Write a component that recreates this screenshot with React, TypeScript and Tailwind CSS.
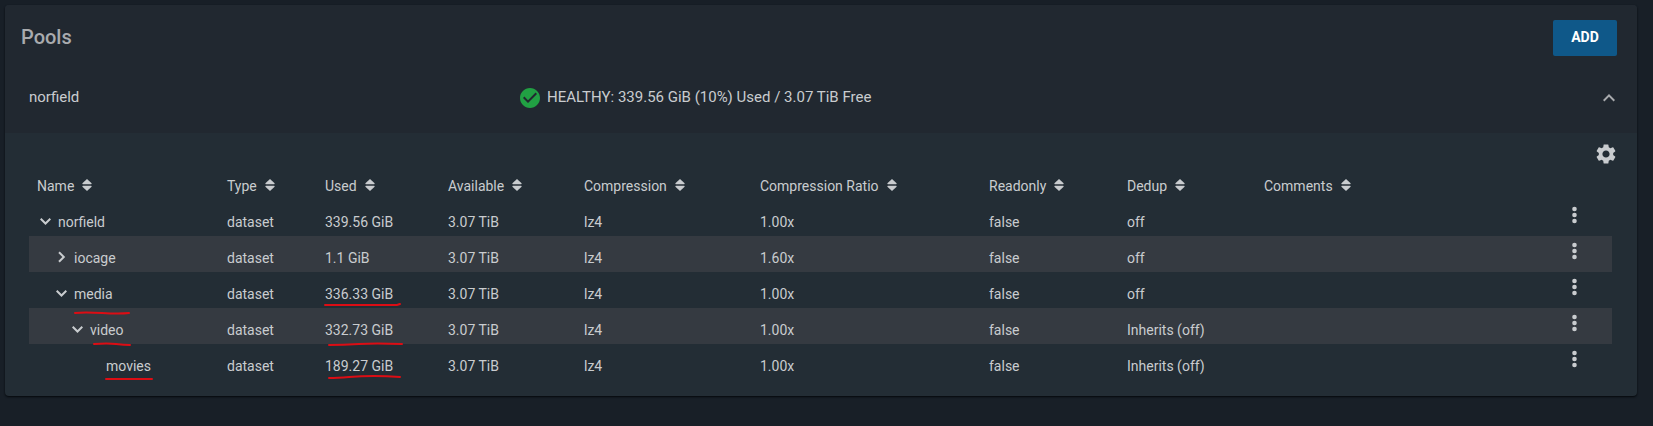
import { useState } from "react";
import { MdCheckCircle, MdExpandLess, MdSettings } from "react-icons/md";

type Mark = { className: string; d: string };

type Dataset = {
  name: string;
  level: number;
  open?: boolean;
  used: string;
  ratio: string;
  dedup: string;
  nameMark?: Mark;
  usedMark?: Mark;
};

const columns = [
  { label: "Name", width: "w-[190px]" },
  { label: "Type", width: "w-[98px]" },
  { label: "Used", width: "w-[123px]" },
  { label: "Available", width: "w-[136px]" },
  { label: "Compression", width: "w-[176px]" },
  { label: "Compression Ratio", width: "w-[229px]" },
  { label: "Readonly", width: "w-[138px]" },
  { label: "Dedup", width: "w-[137px]" },
  { label: "Comments", width: "" },
];

const datasets: Dataset[] = [
  { name: "norfield", level: 0, open: true, used: "339.56 GiB", ratio: "1.00x", dedup: "off" },
  { name: "iocage", level: 1, open: false, used: "1.1 GiB", ratio: "1.60x", dedup: "off" },
  {
    name: "media",
    level: 1,
    open: true,
    used: "336.33 GiB",
    ratio: "1.00x",
    dedup: "off",
    nameMark: { className: "left-0 top-6", d: "M1 5 Q10 4 28 5 T55 5" },
    usedMark: { className: "left-0 top-4", d: "M0 3 H72 L75 2" },
  },
  {
    name: "video",
    level: 2,
    open: true,
    used: "332.73 GiB",
    ratio: "1.00x",
    dedup: "Inherits (off)",
    nameMark: { className: "left-1 top-5", d: "M0 4 Q14 3 22 4 T36 5" },
    usedMark: { className: "left-0 top-4", d: "M4 7 Q18 7 34 6 T77 6" },
  },
  {
    name: "movies",
    level: 3,
    used: "189.27 GiB",
    ratio: "1.00x",
    dedup: "Inherits (off)",
    nameMark: { className: "left-0 top-5", d: "M0 3 L46 3" },
    usedMark: { className: "left-0 top-4", d: "M4 4 Q12 4 24 3 T49 2 T75 3" },
  },
];

const indents = ["pl-0", "pl-4", "pl-8", "pl-12"];

function SortIcon() {
  return (
    <svg viewBox="0 0 10 12" className="w-[10px] h-3 flex-shrink-0" fill="currentColor" aria-hidden="true">
      <path d="M5 0 L9.6 4.3 Q9.8 5.2 9 5.2 H1 Q0.2 5.2 0.4 4.3Z" />
      <path d="M5 12 L9.6 7.7 Q9.8 6.8 9 6.8 H1 Q0.2 6.8 0.4 7.7Z" />
    </svg>
  );
}

function Chevron({ open }: { open: boolean }) {
  return (
    <svg viewBox="0 0 16 16" className="size-4" fill="none" stroke="currentColor" strokeWidth="2" aria-hidden="true">
      <path d={open ? "M3.7 5.8 L8.5 10.5 L13.3 5.8" : "M6 3.2 L10.8 8 L6 12.8"} />
    </svg>
  );
}

function Dots() {
  return (
    <svg viewBox="0 0 24 24" className="size-6" fill="currentColor" aria-hidden="true">
      <circle cx="12.5" cy="6" r="2.3" />
      <circle cx="12.5" cy="12" r="2.3" />
      <circle cx="12.5" cy="18" r="2.3" />
    </svg>
  );
}

function Underline({ mark }: { mark: Mark }) {
  return (
    <svg width="76" height="6" className={`absolute overflow-visible pointer-events-none z-10 ${mark.className}`} aria-hidden="true">
      <path d={mark.d} fill="none" stroke="#dc0d14" strokeWidth="2" strokeLinecap="round" />
    </svg>
  );
}

export default function App() {
  const [expanded, setExpanded] = useState(true);

  return (
    <main className="min-h-screen bg-[#181f27] pt-[5px] pl-[5px] pr-4 pb-[30px] font-['Roboto',sans-serif] text-sm text-[#c9cccf]">
      <section className="rounded bg-[#232d35] shadow-[0_1px_2px_#05080c]">
        <div className="rounded-t bg-[#212830]">
          {/* Title bar */}
          <header className="flex items-start justify-between pt-[15px] pl-4 pr-5">
            <h1 className="text-xl leading-[34px] font-medium text-[#a9abae]">Pools</h1>
            <button className="h-9 w-16 rounded-xs bg-[#0f5889] pb-0.5 text-sm font-bold text-white">
              ADD
            </button>
          </header>

          {/* Pool summary */}
          <div className="flex h-[77px] items-start pt-[29px] pl-6 pr-4 text-[15px] leading-6">
            <div className="w-[489px]">norfield</div>
            <div className="flex flex-1 items-start gap-[5px]">
              <MdCheckCircle className="mt-px size-6 text-[#21a043]" />
              <span>HEALTHY: 339.56 GiB (10%) Used / 3.07 TiB Free</span>
            </div>
            <button aria-label="Toggle norfield" onClick={() => setExpanded(!expanded)} className="mt-px text-[#a9abae]">
              <MdExpandLess className={`size-6 ${expanded ? "" : "rotate-180"}`} />
            </button>
          </div>
        </div>

        {expanded && (
          <div className="pt-[9px] pb-4 pl-6 pr-[25px]">
            <div className="-mr-1.5 flex justify-end">
              <button aria-label="Columns">
                <MdSettings className="size-6" />
              </button>
            </div>

            <table className="w-full table-fixed border-collapse text-left">
              <thead>
                <tr className="h-[34px]">
                  {columns.map((col) => (
                    <th key={col.label} className={`pl-2 pt-1.5 pb-0 font-normal whitespace-nowrap ${col.width}`}>
                      <button className="flex items-start gap-2 leading-5">
                        {col.label}
                        <span className="pt-[3px]">
                          <SortIcon />
                        </span>
                      </button>
                    </th>
                  ))}
                  <th className="w-[76px]" aria-label="Actions" />
                </tr>
              </thead>
              <tbody>
                {datasets.map((row) => (
                  <tr key={row.name} className="h-9 even:bg-[#353a41] *:pl-2 *:pt-2 *:pb-0">
                    <td>
                      <div className={`flex items-center gap-[5px] ${indents[row.level]}`}>
                        {row.open === undefined ? (
                          <span className="w-4" />
                        ) : (
                          <button aria-label={`Toggle ${row.name}`} className="h-5 w-4 pb-0.5">
                            <Chevron open={row.open} />
                          </button>
                        )}
                        <span className="relative">
                          {row.name}
                          {row.nameMark && <Underline mark={row.nameMark} />}
                        </span>
                      </div>
                    </td>
                    <td>dataset</td>
                    <td>
                      <span className="relative">
                        {row.used}
                        {row.usedMark && <Underline mark={row.usedMark} />}
                      </span>
                    </td>
                    <td>3.07 TiB</td>
                    <td>lz4</td>
                    <td>{row.ratio}</td>
                    <td>false</td>
                    <td>{row.dedup}</td>
                    <td />
                    <td className="!p-0 align-top">
                      <button aria-label={`${row.name} actions`} className="mx-auto mt-[3px] block">
                        <Dots />
                      </button>
                    </td>
                  </tr>
                ))}
              </tbody>
            </table>
          </div>
        )}
      </section>
    </main>
  );
}
